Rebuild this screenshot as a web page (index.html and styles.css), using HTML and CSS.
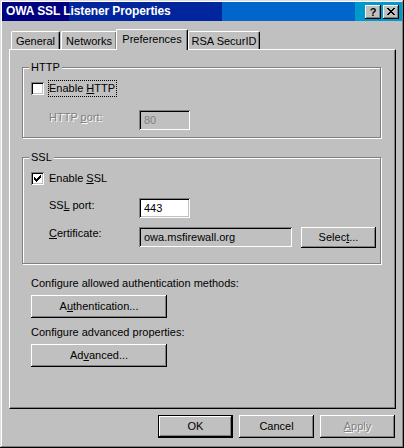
FILE: index.html
```html
<!DOCTYPE html>
<html lang="en">
<head>
    <meta charset="utf-8">
    <meta name="viewport" content="width=device-width, initial-scale=1.0">
    <title>OWA SSL Listener Properties</title>
    <link rel="stylesheet" href="styles.css">
</head>
<body>
<div class="window">
    <div class="caption">
        <span class="caption-title">OWA SSL Listener Properties</span>
        <button class="caption-btn help">?</button>
        <button class="caption-btn close">
            <svg width="8" height="8" viewBox="0 0 8 8" shape-rendering="crispEdges"><path d="M0 0h2v1h-2z M6 0h2v1h-2z M1 1h2v1h-2z M5 1h2v1h-2z M2 2h4v1h-4z M3 3h2v1h-2z M2 4h4v1h-4z M1 5h2v1h-2z M5 5h2v1h-2z M0 6h2v1h-2z M6 6h2v1h-2z"/></svg>
        </button>
    </div>

    <div class="tabs">
        <div class="tab tab-general">General</div>
        <div class="tab tab-networks">Networks</div>
        <div class="tab tab-prefs active">Preferences</div>
        <div class="tab tab-rsa">RSA SecurID</div>
    </div>

    <div class="sheet">
        <fieldset class="group group-http">
            <legend>HTTP</legend>
            <div class="check-row">
                <span class="check"></span>
                <span class="check-label focus">Enable <u>H</u>TTP</span>
            </div>
            <div class="field-row row-http-port">
                <span class="field-label disabled">HTTP <u>p</u>ort:</span>
                <input class="edit edit-port" value="80" disabled>
            </div>
        </fieldset>

        <fieldset class="group group-ssl">
            <legend>SSL</legend>
            <div class="check-row">
                <span class="check">
                    <svg width="7" height="7" viewBox="0 0 7 7" shape-rendering="crispEdges"><path d="M6 0h1v1h-1z M5 1h2v1h-2z M0 2h1v1h-1z M4 2h3v1h-3z M0 3h2v1h-2z M3 3h3v1h-3z M0 4h5v1h-5z M1 5h3v1h-3z M2 6h1v1h-1z"/></svg>
                </span>
                <span class="check-label">Enable <u>S</u>SL</span>
            </div>
            <div class="field-row row-ssl-port">
                <span class="field-label">SS<u>L</u> port:</span>
                <input class="edit edit-port" value="443">
            </div>
            <div class="field-row row-cert">
                <span class="field-label"><u>C</u>ertificate:</span>
                <input class="edit edit-cert" value="owa.msfirewall.org" readonly>
                <button class="btn btn-select">Selec<u>t</u>...</button>
            </div>
        </fieldset>

        <p class="note note-auth">Configure allowed authentication methods:</p>
        <button class="btn btn-wide">A<u>u</u>thentication...</button>
        <p class="note note-adv">Configure advanced properties:</p>
        <button class="btn btn-wide">Ad<u>v</u>anced...</button>
    </div>

    <div class="footer">
        <button class="btn btn-footer btn-default">OK</button>
        <button class="btn btn-footer">Cancel</button>
        <button class="btn btn-footer" disabled><u>A</u>pply</button>
    </div>
</div>
</body>
</html>
```

FILE: styles.css
```css
body {
    margin: 0;
    background: #c0c0c0;
    font-family: "Liberation Sans", Arial, sans-serif;
    font-size: 11px;
    line-height: 13px;
    color: #000;
}
u {
    text-decoration-skip-ink: none;
}
button, input {
    font-family: inherit;
    font-size: 11px;
    line-height: 13px;
    margin: 0;
}

.window {
    width: 404px;
    height: 448px;
    box-sizing: border-box;
    padding: 2px;
    background: #c0c0c0;
    box-shadow: inset -1px -1px #000, inset 1px 1px #dfdfdf, inset -2px -2px #808080, inset 2px 2px #fff;
    display: flex;
    flex-direction: column;
}

/* title bar */
.caption {
    height: 19px;
    display: flex;
    align-items: flex-start;
    padding-right: 3px;
    background: linear-gradient(to right, #000080 0 67px, #00259d 67px 220px, #0066cc 220px 353px, #0099cc 353px);
}
.caption-title {
    flex: 1;
    padding: 3px 0 0 4px;
    color: #fff;
    font-weight: bold;
    font-size: 12px;
    letter-spacing: -0.1px;
    white-space: nowrap;
}
.caption-btn {
    width: 16px;
    height: 14px;
    margin-top: 3px;
    padding: 0;
    border: 0;
    background: #c0c0c0;
    box-shadow: inset -1px -1px #000, inset 1px 1px #fff, inset -2px -2px #808080;
    display: flex;
    align-items: center;
    justify-content: center;
    font-weight: bold;
    font-size: 11px;
    color: #000;
}
.caption-btn svg {
    display: block;
}
.close {
    margin-left: 2px;
}

/* tabs */
.tabs {
    display: flex;
    align-items: flex-end;
    height: 20px;
    margin-top: 8px;
    padding-left: 9px;
}
.tab {
    height: 18px;
    box-sizing: border-box;
    padding-top: 3px;
    margin-right: 1px;
    border-top: 1px solid #fff;
    border-left: 1px solid #fff;
    border-right: 1px solid #000;
    border-radius: 2px 2px 0 0;
    box-shadow: inset -1px 0 #808080;
    text-align: center;
    white-space: nowrap;
}
.tab.active {
    height: 21px;
    margin: 0 0 -1px -2px;
    position: relative;
    z-index: 1;
    background: #c0c0c0;
}
.tab-general { width: 49px; }
.tab-networks { width: 56px; }
.tab-prefs { width: 72px; }
.tab-rsa { width: 72px; }

/* property page */
.sheet {
    width: 387px;
    height: 360px;
    margin-left: 7px;
    box-sizing: border-box;
    border-top: 1px solid #fff;
    border-left: 1px solid #fff;
    border-right: 1px solid #000;
    border-bottom: 1px solid #000;
    box-shadow: inset -1px -1px #808080;
}

.group {
    width: 359px;
    min-width: 0;
    box-sizing: border-box;
    margin: 0 0 0 12px;
    padding: 6px 0 0 8px;
    border: 1px solid #808080;
    box-shadow: 1px 1px #fff, inset 1px 1px #fff;
}
.group legend {
    margin-left: -2px;
    padding: 0 2px;
    background: #c0c0c0;
}
.group-http {
    margin-top: 11px;
    padding-bottom: 7px;
}
.group-ssl {
    margin-top: 13px;
    padding-bottom: 15px;
}

.check-row {
    display: flex;
    align-items: center;
    height: 17px;
}
.check {
    width: 13px;
    height: 13px;
    box-sizing: border-box;
    background: #fff;
    box-shadow: inset 1px 1px #808080, inset -1px -1px #fff, inset 2px 2px #000, inset -2px -2px #c0c0c0;
    display: flex;
    align-items: center;
    justify-content: center;
}
.check svg {
    display: block;
}
.check-label {
    margin-left: 4px;
    padding: 1px 1px 1px 0;
    border: 1px solid transparent;
}
.check-label.focus {
    border: 1px dotted #000;
}

.field-row {
    display: flex;
    align-items: flex-start;
    margin-left: 18px;
}
.row-http-port { margin-top: 13px; }
.row-ssl-port { margin-top: 11px; }
.row-cert { margin-top: 9px; }

.field-label {
    width: 90px;
    margin-top: 1px;
    white-space: nowrap;
}
.row-cert .field-label {
    margin-top: 0;
}
.disabled {
    color: #808080;
    text-shadow: 1px 1px #fff;
}

.edit {
    width: 51px;
    height: 20px;
    box-sizing: border-box;
    padding: 0 0 0 5px;
    border: 0;
    outline: none;
    background: #fff;
    color: #000;
    box-shadow: inset 1px 1px #808080, inset -1px -1px #fff, inset 2px 2px #000, inset -2px -2px #c0c0c0;
}
.edit:disabled {
    background: #c0c0c0;
    color: #808080;
}
.edit-cert {
    width: 153px;
    background: #c0c0c0;
}

/* push buttons */
.btn {
    padding: 0;
    border: 0;
    background: #c0c0c0;
    color: #000;
    box-shadow: inset -1px -1px #000, inset 1px 1px #fff, inset -2px -2px #808080;
}
.btn:disabled {
    color: #808080;
    text-shadow: 1px 1px #fff;
}
.btn-default {
    box-shadow: inset 0 0 0 1px #000, inset -2px -2px #000, inset 2px 2px #fff, inset -3px -3px #808080;
}
.btn-select {
    width: 75px;
    height: 21px;
    margin-left: 9px;
}
.btn-wide {
    display: block;
    width: 136px;
    height: 23px;
    margin: 5px 0 0 21px;
}

.note {
    margin: 0 0 0 21px;
    white-space: nowrap;
}
.note-auth { margin-top: 13px; }
.note-adv { margin-top: 8px; }

.footer {
    display: flex;
    justify-content: flex-end;
    gap: 6px;
    margin-top: 6px;
    padding-right: 7px;
}
.btn-footer {
    width: 75px;
    height: 23px;
}
```
